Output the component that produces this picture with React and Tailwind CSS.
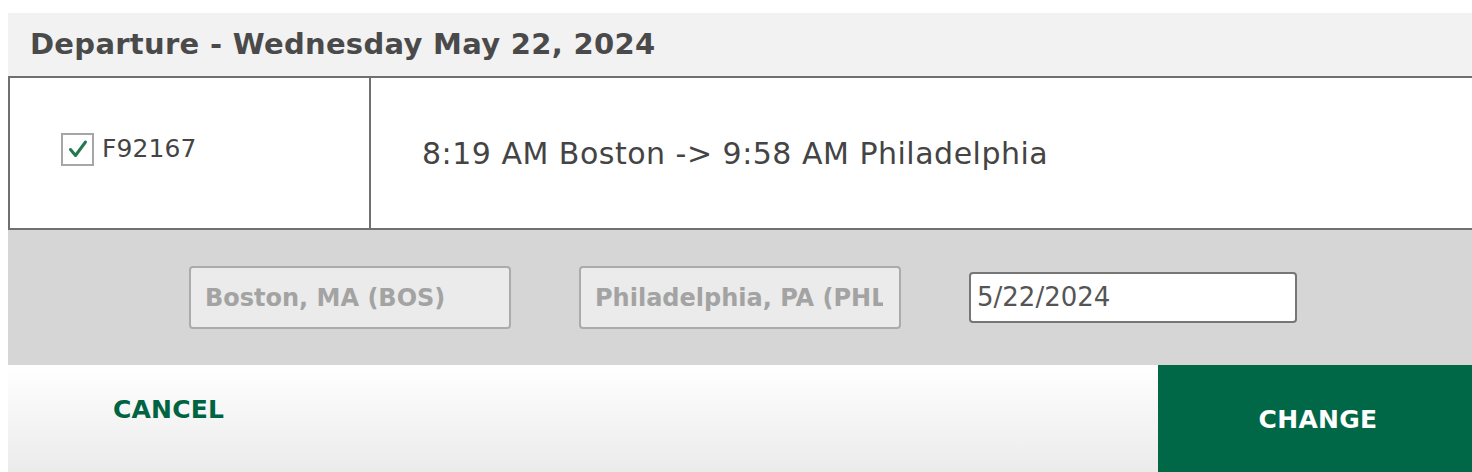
import React from 'react';

const FONT = { fontFamily: '"DejaVu Sans", "Open Sans", sans-serif' };

const CheckBox = () => (
  <span className="flex h-[33px] w-[33px] shrink-0 items-center justify-center border-2 border-[#a6a6a6] bg-white">
    <svg viewBox="0 0 24 24" className="h-[24px] w-[24px]">
      <path d="M4.5 12.5 L9.5 18.5 L19.5 5" fill="none" stroke="#23784f" strokeWidth="3" strokeLinecap="round" strokeLinejoin="round" />
    </svg>
  </span>
);

const Field = ({ text }) => (
  <div className="flex h-[63px] w-[322px] items-center rounded-[4px] border-2 border-[#ababab] bg-[#ebebeb] pl-[14px] pr-[16px]">
    <div className="flex-1 overflow-hidden whitespace-nowrap text-[24px] font-bold text-[#a3a3a3]">{text}</div>
  </div>
);

export default function App() {
  return (
    <div className="h-[472px] w-[1472px] overflow-hidden bg-white pl-[8px] pt-[13px]" style={FONT}>
      <div className="w-[1470px]">
        {/* Header */}
        <div className="flex h-[63px] items-center bg-[#f2f2f2] pl-[22px]">
          <h2 className="text-[29px] font-bold tracking-[0.3px] text-[#4a4a4a]">Departure - Wednesday May 22, 2024</h2>
        </div>

        {/* Flight row */}
        <div className="flex h-[154px] border-y-2 border-l-2 border-[#707070]">
          <div className="flex w-[361px] items-center gap-[8px] border-r-2 border-[#707070] pb-[8px] pl-[51px]">
            <CheckBox />
            <span className="text-[25px] tracking-[0.1px] text-[#444]">F92167</span>
          </div>
          <div className="flex flex-1 items-center pl-[51px]">
            <span className="text-[30px] tracking-[0.5px] text-[#444]">8:19 AM Boston -&gt; 9:58 AM Philadelphia</span>
          </div>
        </div>

        {/* Search fields */}
        <div className="flex h-[135px] items-center gap-[68px] bg-[#d6d6d6] pl-[181px]">
          <Field text="Boston, MA (BOS)" />
          <Field text="Philadelphia, PA (PHL)" />
          <div className="flex h-[51px] w-[328px] items-center rounded-[4px] border-2 border-[#767676] bg-white pl-[6px]">
            <span className="text-[26px] text-[#555]">5/22/2024</span>
          </div>
        </div>

        {/* Actions */}
        <div className="flex h-[107px]">
          <div className="flex flex-1 items-start bg-gradient-to-b from-white to-[#ebebeb] pl-[105px] pt-[26px]">
            <span className="text-[25px] font-bold tracking-[0.2px] text-[#006341]">CANCEL</span>
          </div>
          <div className="flex w-[320px] items-center justify-center bg-[#006846] pt-[3px]">
            <span className="text-[25px] font-bold tracking-[0.3px] text-white">CHANGE</span>
          </div>
        </div>
      </div>
    </div>
  );
}
